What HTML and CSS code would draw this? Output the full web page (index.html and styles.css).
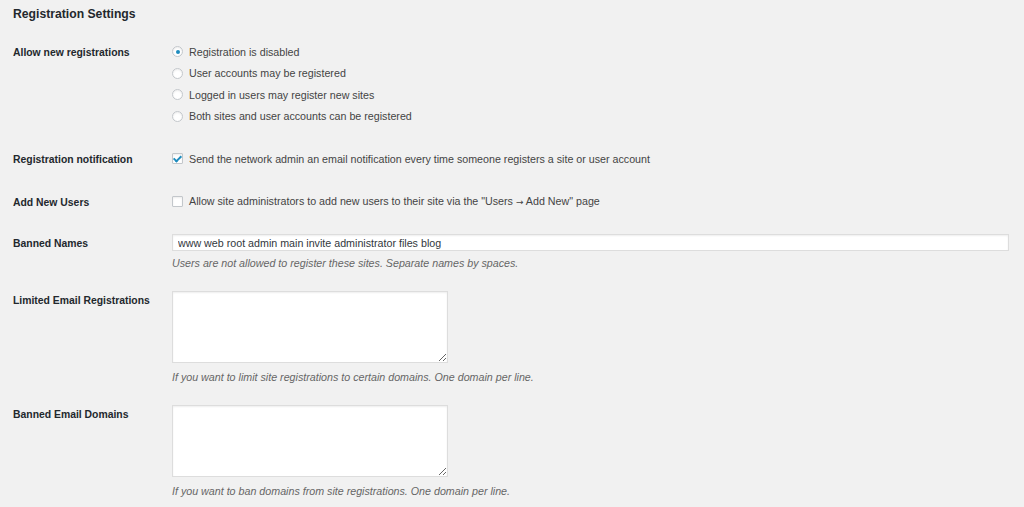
FILE: index.html
```html
<!DOCTYPE html>
<html lang="en">
  <head>
    <meta charset="UTF-8" />
    <title>Network Settings</title>
    <link rel="stylesheet" href="styles.css">
  </head>
  <body>
    <div class="wrap">
      <h2>Registration Settings</h2>
      <form class="form-table">
        <div class="row">
          <div class="th th-line">Allow new registrations</div>
          <div class="td">
            <label class="opt"><input type="radio" name="reg" checked /><span>Registration is disabled</span></label>
            <label class="opt"><input type="radio" name="reg" /><span>User accounts may be registered</span></label>
            <label class="opt"><input type="radio" name="reg" /><span>Logged in users may register new sites</span></label>
            <label class="opt"><input type="radio" name="reg" /><span>Both sites and user accounts can be registered</span></label>
          </div>
        </div>

        <div class="row">
          <div class="th th-line">Registration notification</div>
          <div class="td">
            <label class="opt"><input type="checkbox" checked /><span>Send the network admin an email notification every time someone registers a site or user account</span></label>
          </div>
        </div>

        <div class="row">
          <div class="th th-line">Add New Users</div>
          <div class="td">
            <label class="opt"><input type="checkbox" /><span>Allow site administrators to add new users to their site via the "Users <span class="arrow">&rarr;</span> Add New" page</span></label>
          </div>
        </div>

        <div class="row row-text">
          <div class="th th-input">Banned Names</div>
          <div class="td">
            <input class="large-text" type="text" value="www web root admin main invite administrator files blog" />
            <p class="description">Users are not allowed to register these sites. Separate names by spaces.</p>
          </div>
        </div>

        <div class="row">
          <div class="th th-area">Limited Email Registrations</div>
          <div class="td">
            <textarea></textarea>
            <p class="description">If you want to limit site registrations to certain domains. One domain per line.</p>
          </div>
        </div>

        <div class="row">
          <div class="th th-area">Banned Email Domains</div>
          <div class="td">
            <textarea></textarea>
            <p class="description">If you want to ban domains from site registrations. One domain per line.</p>
          </div>
        </div>
      </form>
    </div>
  </body>
</html>
```

FILE: styles.css
```css
body {
  margin: 0;
  background: #f1f1f1;
  font-family: "Liberation Sans", Arial, sans-serif;
  font-size: 10.7px;
  color: #444;
}
.wrap {
  padding: 7px 0 0 13px;
}
h2 {
  margin: 0;
  font-size: 12.2px;
  line-height: 14px;
  font-weight: bold;
  color: #23282d;
}
.form-table {
  display: flex;
  flex-direction: column;
  gap: 21px;
  margin-top: 20px;
}
.row {
  display: flex;
}
.row-text {
  padding-top: 1px;
}
.th {
  width: 159px;
  flex: none;
  font-size: 10.4px;
  font-weight: bold;
  color: #23282d;
}
.th-line {
  line-height: 21.5px;
  padding-top: 1px;
  margin-bottom: -1px;
}
.th-input {
  line-height: 17px;
  padding-top: 1px;
}
.th-area {
  padding-top: 3px;
  line-height: 14px;
}
.td {
  flex: 1;
}
.opt {
  display: flex;
  align-items: center;
  height: 21.5px;
  white-space: nowrap;
}
.arrow {
  font-family: "DejaVu Sans", sans-serif;
  font-size: 9px;
}
.opt input {
  appearance: none;
  -webkit-appearance: none;
  width: 11px;
  height: 11px;
  margin: 0 6px 0 0;
  border: 1px solid #c3c7cb;
  background: #fff;
  box-shadow: inset 0 1px 2px rgba(0, 0, 0, 0.08);
  box-sizing: border-box;
  display: grid;
  place-items: center;
}
.opt input[type="radio"] {
  border-radius: 50%;
}
.opt input[type="radio"]:checked::before {
  content: "";
  width: 4px;
  height: 4px;
  border-radius: 50%;
  background: #1e8cbe;
}
.opt input[type="checkbox"] {
  border-radius: 1px;
}
.opt input[type="checkbox"]:checked::before {
  content: "";
  width: 3px;
  height: 6px;
  margin-top: -2px;
  border: solid #1e8cbe;
  border-width: 0 2px 2px 0;
  transform: rotate(45deg);
}
.large-text,
textarea {
  display: block;
  margin: 0;
  box-sizing: border-box;
  border: 1px solid #ddd;
  background: #fff;
  box-shadow: inset 0 1px 2px rgba(0, 0, 0, 0.07);
  font-family: inherit;
  font-size: 10.7px;
  color: #32373c;
}
.large-text {
  width: 837px;
  height: 17px;
  padding: 0 5px;
}
textarea {
  width: 276px;
  height: 72px;
  padding: 3px 5px;
  resize: vertical;
}
.description {
  margin: 0;
  padding-top: 5px;
  line-height: 14px;
  font-style: italic;
  color: #666;
}
textarea + .description {
  padding-top: 7px;
}
```
